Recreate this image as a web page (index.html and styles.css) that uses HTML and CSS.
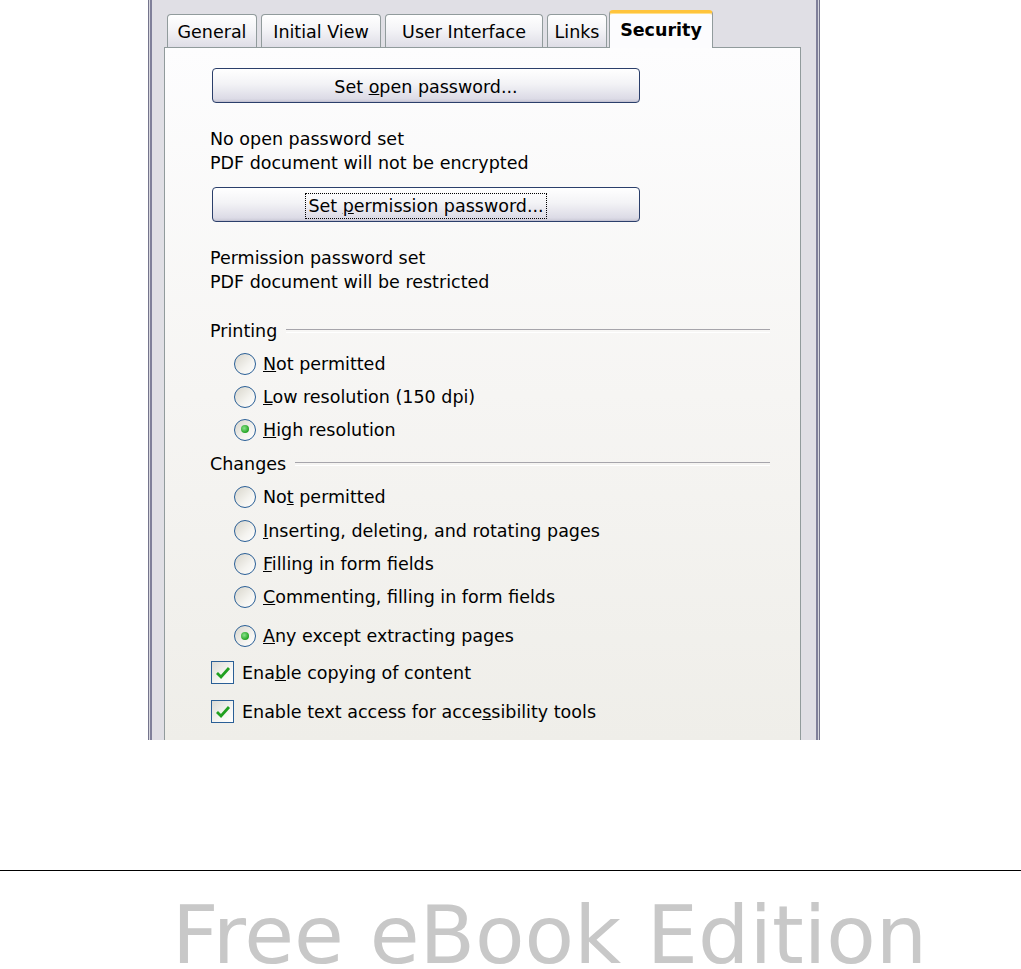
FILE: index.html
```html
<!DOCTYPE html>
<html lang="en">

<head>
  <meta charset="utf-8">
  <title>PDF Options - Security</title>
  <link rel="stylesheet" href="styles.css">
</head>

<body>
  <div class="dialog">
    <div class="tabs">
      <div class="tab tab-general">General</div>
      <div class="tab tab-view">Initial View</div>
      <div class="tab tab-ui">User Interface</div>
      <div class="tab tab-links">Links</div>
      <div class="tab tab-active">Security</div>
    </div>

    <div class="panel">
      <button class="btn"><span>Set <u>o</u>pen password...</span></button>
      <p class="status status-first">No open password set<br>PDF document will not be encrypted</p>

      <button class="btn btn-focus"><span>Set <u>p</u>ermission password...</span></button>
      <p class="status">Permission password set<br>PDF document will be restricted</p>

      <div class="group group-printing">
        <div class="group-title">Printing</div>
        <label class="option"><span class="radio"></span><span><u>N</u>ot permitted</span></label>
        <label class="option"><span class="radio"></span><span><u>L</u>ow resolution (150 dpi)</span></label>
        <label class="option"><span class="radio checked"></span><span><u>H</u>igh resolution</span></label>
      </div>

      <div class="group group-changes">
        <div class="group-title">Changes</div>
        <label class="option"><span class="radio"></span><span>No<u>t</u> permitted</span></label>
        <label class="option option-second"><span class="radio"></span><span><u>I</u>nserting, deleting, and rotating pages</span></label>
        <label class="option"><span class="radio"></span><span><u>F</u>illing in form fields</span></label>
        <label class="option"><span class="radio"></span><span><u>C</u>ommenting, filling in form fields</span></label>
        <label class="option option-tall"><span class="radio checked"></span><span><u>A</u>ny except extracting pages</span></label>
      </div>

      <label class="check-row">
        <span class="checkbox">
          <svg viewBox="0 0 22 22" width="22" height="22"><path d="M5 11 l4 4 l8 -9" fill="none" stroke="#21a121" stroke-width="2.8"/></svg>
        </span>
        <span>Ena<u>b</u>le copying of content</span>
      </label>
      <label class="check-row">
        <span class="checkbox">
          <svg viewBox="0 0 22 22" width="22" height="22"><path d="M5 11 l4 4 l8 -9" fill="none" stroke="#21a121" stroke-width="2.8"/></svg>
        </span>
        <span>Enable text access for acce<u>s</u>sibility tools</span>
      </label>
    </div>
  </div>

  <div class="footer">
    <p class="edition">Free eBook Edition</p>
  </div>
</body>

</html>
```

FILE: styles.css
```css
* {
  margin: 0;
  padding: 0;
  box-sizing: border-box;
}

body {
  background: #fff;
  font-family: 'DejaVu Sans', Verdana, sans-serif;
}

/* dialog frame */
.dialog {
  display: flex;
  flex-direction: column;
  width: 672px;
  height: 740px;
  margin-left: 148px;
  padding-top: 10px;
  background: #e0dfe5;
  border-left: 1px solid #74748c;
  border-right: 1px solid #74748c;
  box-shadow: inset 1px 0 0 #d6d6de, inset 3px 0 0 #80809a, inset -1px 0 0 #d6d6de, inset -3px 0 0 #80809a;
  font-size: 17.5px;
  color: #000;
}

.tabs {
  display: flex;
  align-items: flex-end;
  gap: 4px;
  height: 37px;
  margin-left: 18px;
}

.tab {
  flex: none;
  height: 33px;
  line-height: 34px;
  text-align: center;
  border: 1px solid #919b9c;
  border-bottom: none;
  border-radius: 4px 4px 0 0;
  background: linear-gradient(to bottom, #ffffff, #f4f4f7 45%, #dedde6);
}

.tab-general { width: 90px; }
.tab-view { width: 120px; }
.tab-ui { width: 158px; }
.tab-links { width: 60px; }

.tab-active {
  position: relative;
  z-index: 1;
  width: 104px;
  height: 38px;
  margin: 0 -2px -1px -2px;
  line-height: 35px;
  font-weight: bold;
  background: #fcfcfe;
  border-top: 3px solid #ffc43c;
  box-shadow: inset 0 1px 0 #ffdf8c;
  border-radius: 4px 4px 0 0;
}

.panel {
  flex: 1;
  margin-left: 15px;
  width: 637px;
  padding: 20px 30px 0 45px;
  border: 1px solid #919b9c;
  border-bottom: none;
  background: linear-gradient(to bottom, #fdfdfe, #f6f5f3 50%, #efeee9);
}

/* push buttons */
.btn {
  display: block;
  width: 428px;
  height: 35px;
  margin-left: 2px;
  padding-top: 2px;
  font: inherit;
  color: #000;
  border: 1px solid #2b3f6b;
  border-radius: 4px;
  background: linear-gradient(to bottom, #ffffff, #f3f3f6 45%, #dcdbe6 90%, #c9c8d6);
  box-shadow: inset 0 -1px 0 #c4c3d3;
}

.btn-focus span {
  outline: 1px dotted #000;
  outline-offset: 2px;
}

.status {
  line-height: 23.5px;
  margin: 25px 0 12px;
}

/* groups */
.group-printing {
  margin-top: 20px;
}

.group-changes {
  margin-top: 1px;
}

.group-title {
  display: flex;
  align-items: center;
  gap: 9px;
  height: 33px;
}

.group-title::after {
  content: '';
  flex: 1;
  height: 2px;
  border-top: 1px solid #a6a5ab;
  border-bottom: 1px solid #ffffff;
}

.option {
  display: flex;
  align-items: center;
  gap: 7px;
  height: 33px;
  padding-left: 24px;
}

.option-second {
  height: 34px;
  padding-top: 2px;
}

.option-tall {
  height: 38px;
  margin-top: 2px;
  padding-top: 4px;
}

.radio {
  position: relative;
  flex: none;
  width: 22px;
  height: 22px;
  border: 1.5px solid #2a5f96;
  border-radius: 50%;
  background: linear-gradient(135deg, #d8d5cb, #f4f3ef 60%, #ffffff);
}

.radio.checked::after {
  content: '';
  position: absolute;
  left: 5.5px;
  top: 5.5px;
  width: 8px;
  height: 8px;
  border-radius: 50%;
  background: radial-gradient(circle at 40% 40%, #8be28b, #22a322 70%);
}

.check-row {
  display: flex;
  align-items: center;
  gap: 8px;
  height: 39px;
  padding-left: 1px;
}

.checkbox {
  flex: none;
  width: 23px;
  height: 23px;
  border: 1.5px solid #2a5f96;
  background: linear-gradient(135deg, #dcdbd5, #f6f6f3 60%, #ffffff);
}

.checkbox svg {
  display: block;
  margin: -0.5px 0 0 -0.5px;
}

/* footer */
.footer {
  margin-top: 130px;
  border-top: 1px solid #000;
}

.edition {
  margin-top: 34px;
  padding-left: 172px;
  font-family: 'DejaVu Sans', Verdana, sans-serif;
  font-size: 81px;
  line-height: 60px;
  color: #c8c8c8;
}
```
